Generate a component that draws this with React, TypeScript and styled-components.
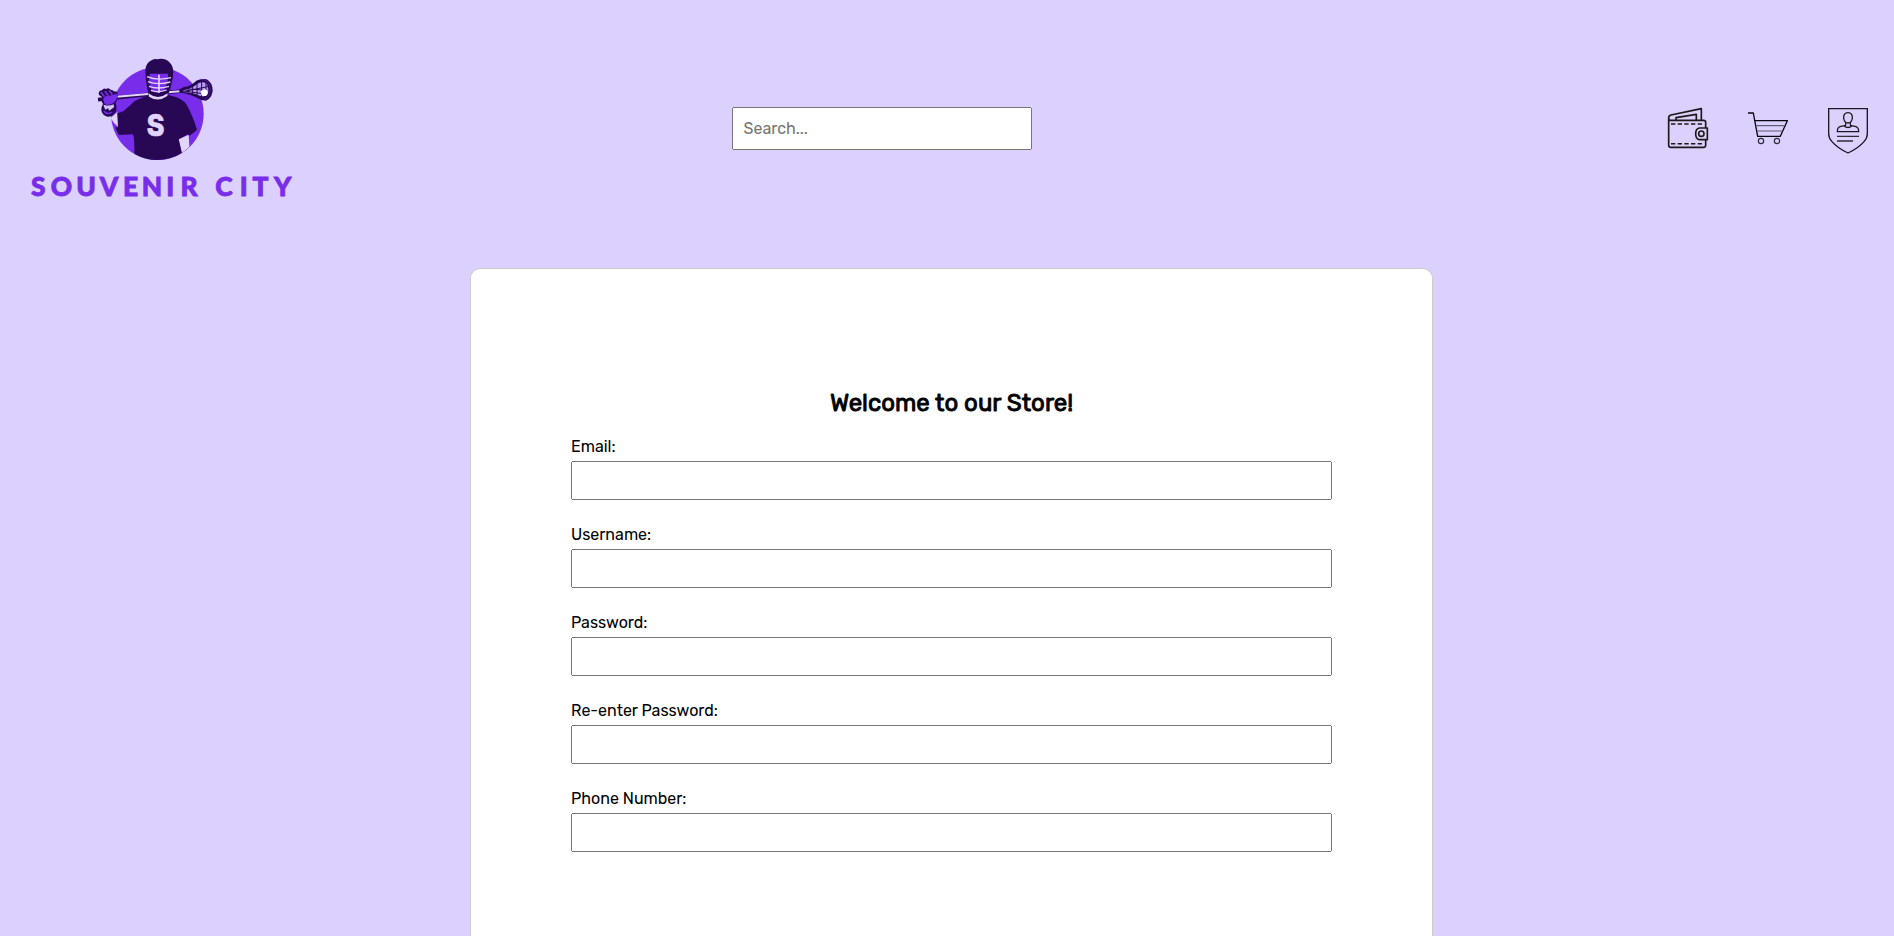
import React from "react";
import styled, { createGlobalStyle } from "styled-components";

const GlobalStyle = createGlobalStyle`
  * { box-sizing: border-box; }
  body {
    margin: 0;
    background: #dbd0fe;
    color: #000;
    font-family: Rubik, Roboto, "Liberation Sans", sans-serif;
    font-size: 16px;
  }
`;

const Page = styled.div`
  display: flex;
  flex-direction: column;
  height: 100vh;
`;

const Header = styled.header`
  display: flex;
  align-items: flex-start;
  height: 268px;
  padding: 40px 14px 0 20px;
`;

const SearchInput = styled.input`
  width: 300px;
  height: 43px;
  margin: 67px 0 0 432px;
  padding: 0 9.5px;
  font: inherit;
  &::placeholder { color: #757575; opacity: 1; }
`;

const Actions = styled.nav`
  display: flex;
  gap: 20px;
  margin: 60px 0 0 auto;
`;

const IconLink = styled.a`
  display: block;
  width: 60px;
  height: 60px;
`;

const Card = styled.form`
  flex: 1;
  width: 963px;
  margin-left: 470px;
  padding: 119px 100px 0;
  border: 1px solid #ccc;
  border-bottom: 0;
  border-radius: 10px 10px 0 0;
  background: #fff;
`;

const Title = styled.h1`
  margin: 0 0 19px;
  font-size: 24px;
  line-height: 30px;
  font-weight: 400;
  -webkit-text-stroke: 0.9px #000;
  text-align: center;
`;

const Field = styled.label`
  display: block;
  height: 88px;
  line-height: 20px;
`;

const TextInput = styled.input`
  display: block;
  width: 100%;
  height: 39px;
  margin-top: 4px;
  padding: 10px;
  font: inherit;
`;

const Logo = () => (
  <svg width="280" height="170" viewBox="0 0 840 510" role="img" aria-label="Souvenir City">
    <circle cx="412" cy="221" r="139" fill="#772dea" />
    {/* arms */}
    <path d="M272 234l20-18 4 46q-16-12-24-28z" fill="#e2d5fc" />
    <path d="M476 298l30-14 2 36q-10 10-22 18z" fill="#e2d5fc" />
    {/* jersey */}
    <path
      d="M385 164Q360 176 344 183Q326 200 310 214L292 220L294 262L286 262Q290 276 297 285L338 283Q344 290 343 341Q376 360 412 360Q452 360 485 339L476 298L505 282L507 288Q522 278 531 269Q518 226 500 194Q490 180 470 172L443 164Z"
      fill="#280855"
    />
    {/* stick */}
    <path d="M234 179L486 153" stroke="#280855" strokeWidth="11" />
    <path d="M290 170L384 162M444 157L480 154" stroke="#e2d5fc" strokeWidth="6" />
    {/* glove */}
    <path
      d="M236 160q2-10 10-9q4-8 12-4q8-6 14 2q8 0 9 5q12-2 12 10q2 14-6 26q4 8 2 22q-10 18-26 18q-18-4-19-20q0-10 5-19q-8-8-2-20q-12-4-11-11z"
      fill="#280855"
    />
    <path
      d="M244 158l8 10M256 155l7 10M269 153l7 10M252 177q6-10 22-8q10-2 14-5q3 10-5 19q-10 12-27 7z"
      fill="#772dea"
      stroke="#772dea"
      strokeWidth="5"
      strokeLinecap="round"
    />
    <path d="M251 198l5 11 8-4 4 7 14-10-1-9q-14 7-30 1z" fill="#d4c2fa" />
    <path d="M251 213q10 13 26 3" stroke="#772dea" strokeWidth="4" fill="none" />
    {/* helmet */}
    <path
      d="M376 92Q376 69 396 60Q404 56 411 58Q426 54 440 60Q460 72 460 96Q459 120 453 137Q449 158 440 167Q414 188 388 166Q380 147 378 122Z"
      fill="#280855"
    />
    <path d="M389 101H444L443 124L433 152Q414 163 395 151L387 125Z" fill="#772dea" />
    <path d="M386 157Q414 173 442 156L443 171Q414 190 387 172Z" fill="#280855" />
    <path d="M385 160Q414 182 443 160L442 168Q414 188 387 170Z" fill="#e2d5fc" />
    <g fill="none" stroke="#e2d5fc" strokeWidth="4">
      <path d="M381 110Q412 123 453 113M384 125Q414 136 451 126M387 139Q414 149 447 139M393 151Q414 160 440 150" />
      <path d="M417 104V158" strokeWidth="5" />
    </g>
    {/* stick head */}
    <path
      d="M478 148L492 141Q512 139 529 122Q544 114 560 118Q579 129 578 153Q574 177 558 182Q542 182 526 171Q508 162 488 159L478 157Z"
      fill="#280855"
    />
    <path d="M491 151Q515 146 535 130Q549 123 560 131Q568 145 563 163Q554 173 539 167Q520 158 491 156Z" fill="#b99cf5" />
    <path
      d="M504 144L505 163M518 137V166M531 128V170M545 123V174M558 123V178M493 154L568 139M493 153L568 164M506 147L562 151"
      stroke="#280855"
      strokeWidth="3"
    />
    <path d="M541 118Q571 117 571 150Q569 174 552 178" fill="none" stroke="#5e24bb" strokeWidth="2" />
    <circle cx="553" cy="158" r="10" fill="#fff" />
    <text
      x="407"
      y="289"
      textAnchor="middle"
      fontFamily="Inter, sans-serif"
      fontWeight="800"
      fontSize="91"
      fill="#e2d5fc"
      stroke="#e2d5fc"
      strokeWidth="2"
      textLength="53"
      lengthAdjust="spacingAndGlyphs"
    >
      S
    </text>
    <text
      x="55 124 198 267 332 396 451 507 572 612 671 721 788"
      y="467.5"
      textAnchor="middle"
      fontFamily="Lato, sans-serif"
      fontWeight="900"
      fontSize="79"
      fill="#772dea"
      stroke="#772dea"
      strokeWidth="2.5"
    >
      SOUVENIR CITY
    </text>
  </svg>
);

const WalletIcon = () => (
  <svg width="60" height="60" viewBox="15 0 180 180" fill="none" stroke="#211718" strokeWidth="5" strokeLinejoin="round">
    <path d="M41 57V136Q41 142 47 142H146Q152 142 152 136V119M152 84V66Q152 61 146 61H47Q41 61 41 53Q41 47 48 45L139 26V60" />
    <path d="M63 60V53L124 43V60" />
    <path d="M157 84H133Q122 86 122 101Q122 117 133 119H157Z" />
    <circle cx="139" cy="101" r="8" />
    <path d="M48 72H144M48 131H144" strokeDasharray="13 7" strokeWidth="4.5" />
  </svg>
);

const CartIcon = () => (
  <svg width="60" height="60" viewBox="0 0 180 180" fill="none" stroke="#080610" strokeWidth="4">
    <path d="M24 39H40L53 109H121L142 62H45" strokeLinejoin="round" />
    <path d="M48 77H134M51 93H128" stroke="#635d73" strokeWidth="3.5" />
    <circle cx="63" cy="123" r="8" stroke="#302b39" strokeWidth="3.5" />
    <circle cx="111" cy="123" r="8" stroke="#302b39" strokeWidth="3.5" />
  </svg>
);

const AccountIcon = () => (
  <svg width="60" height="60" viewBox="0 0 180 180" fill="none" stroke="#1b1722" strokeWidth="4">
    <path d="M26 26H142V101Q142 114 132 125Q115 145 84 159Q53 145 36 125Q26 114 26 101Z" />
    <path d="M84 38C75 38 70 45 71 54C72 63 77 69 84 69C91 69 96 63 97 54C98 45 93 38 84 38Z" />
    <path d="M77 67V76L60 80Q52 83 52 95H116Q116 83 108 80L91 76V67M72 78Q84 87 96 78" strokeWidth="3.8" />
    <path d="M51 109H117M51 123H99" stroke="#302b39" />
  </svg>
);

const fields = [
  { label: "Email:", type: "email" },
  { label: "Username:", type: "text" },
  { label: "Password:", type: "password" },
  { label: "Re-enter Password:", type: "password" },
  { label: "Phone Number:", type: "tel" },
];

export default function App() {
  return (
    <Page>
      <GlobalStyle />
      <Header>
        <Logo />
        <SearchInput placeholder="Search..." />
        <Actions>
          <IconLink aria-label="Wallet"><WalletIcon /></IconLink>
          <IconLink aria-label="Cart"><CartIcon /></IconLink>
          <IconLink aria-label="Account"><AccountIcon /></IconLink>
        </Actions>
      </Header>
      <Card>
        <Title>Welcome to our Store!</Title>
        {fields.map((f) => (
          <Field key={f.label}>
            {f.label}
            <TextInput type={f.type} />
          </Field>
        ))}
      </Card>
    </Page>
  );
}
